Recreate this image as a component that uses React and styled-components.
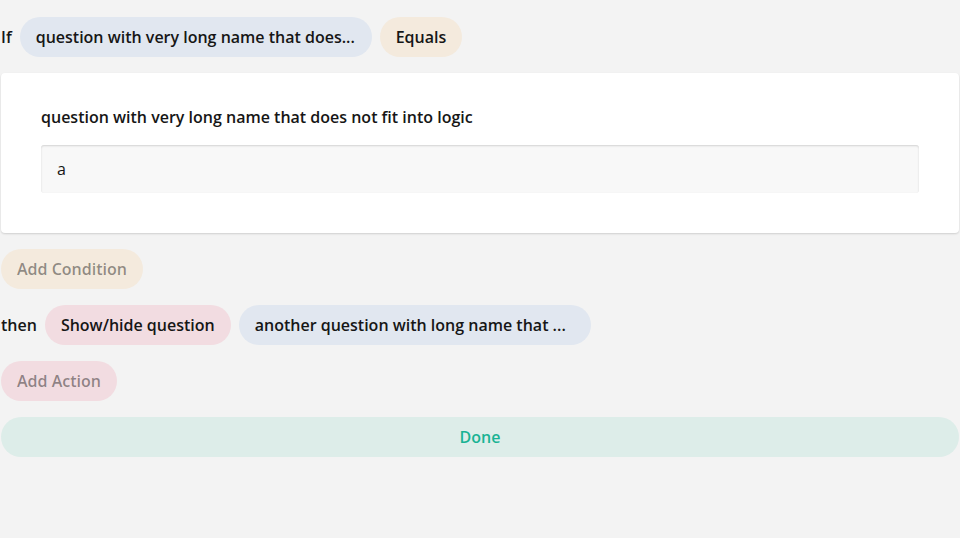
import React from "react";
import styled, { createGlobalStyle } from "styled-components";

const Global = createGlobalStyle`
  html, body { margin: 0; padding: 0; background: #f3f3f3; }
  body { font-family: "Open Sans", "Liberation Sans", sans-serif; color: #161616; }
  * { box-sizing: border-box; }
`;

const Page = styled.div`
  display: flex;
  flex-direction: column;
  gap: 16px;
  padding: 17px 1px 0 1px;
  min-height: 538px;
`;

const Row = styled.div`
  display: flex;
  align-items: center;
  gap: 8px;
`;

const Label = styled.span`
  font-size: 16px;
  line-height: 24px;
  font-weight: 600;
`;

const tints = {
  question: "#e1e7f0",
  operator: "#f4eadd",
  action: "#f2dce1",
  done: "#ddede9",
};

const Pill = styled.button`
  height: 40px;
  border: none;
  border-radius: 20px;
  padding: 0 16px;
  background: ${(p) => tints[p.$kind]};
  color: ${(p) => (p.$muted ? "rgba(0,0,0,0.42)" : p.$kind === "done" ? "#19b394" : "#161616")};
  font-family: inherit;
  font-size: 16px;
  line-height: 24px;
  font-weight: 600;
  white-space: nowrap;
  overflow: hidden;
  text-overflow: ellipsis;
  text-align: ${(p) => (p.$full ? "center" : "left")};
  cursor: pointer;
  align-self: ${(p) => (p.$full ? "stretch" : "flex-start")};
  width: ${(p) => (p.$full ? "100%" : p.$kind === "question" ? "352px" : "auto")};
  flex-shrink: 0;
`;

const Card = styled.div`
  background: #fff;
  border-radius: 4px;
  box-shadow: 0 1px 2px rgba(0, 0, 0, 0.15);
  padding: 32px 40px 40px;
  display: flex;
  flex-direction: column;
  gap: 16px;
`;

const Title = styled.div`
  font-size: 16px;
  line-height: 24px;
  font-weight: 600;
`;

const Input = styled.div`
  background: #f8f8f8;
  border-radius: 3px;
  box-shadow: inset 0 1px 2px rgba(0, 0, 0, 0.15);
  padding: 12px 16px;
  font-size: 16px;
  line-height: 24px;
`;

export default function App() {
  return (
    <>
      <Global />
      <Page>
        <Row>
          <Label>If</Label>
          <Pill $kind="question">question with very long name that does...</Pill>
          <Pill $kind="operator">Equals</Pill>
        </Row>
        <Card>
          <Title>question with very long name that does not fit into logic</Title>
          <Input>a</Input>
        </Card>
        <Pill $kind="operator" $muted>Add Condition</Pill>
        <Row>
          <Label>then</Label>
          <Pill $kind="action">Show/hide question</Pill>
          <Pill $kind="question">another question with long name that ...</Pill>
        </Row>
        <Pill $kind="action" $muted>Add Action</Pill>
        <Pill $kind="done" $full>Done</Pill>
      </Page>
    </>
  );
}
